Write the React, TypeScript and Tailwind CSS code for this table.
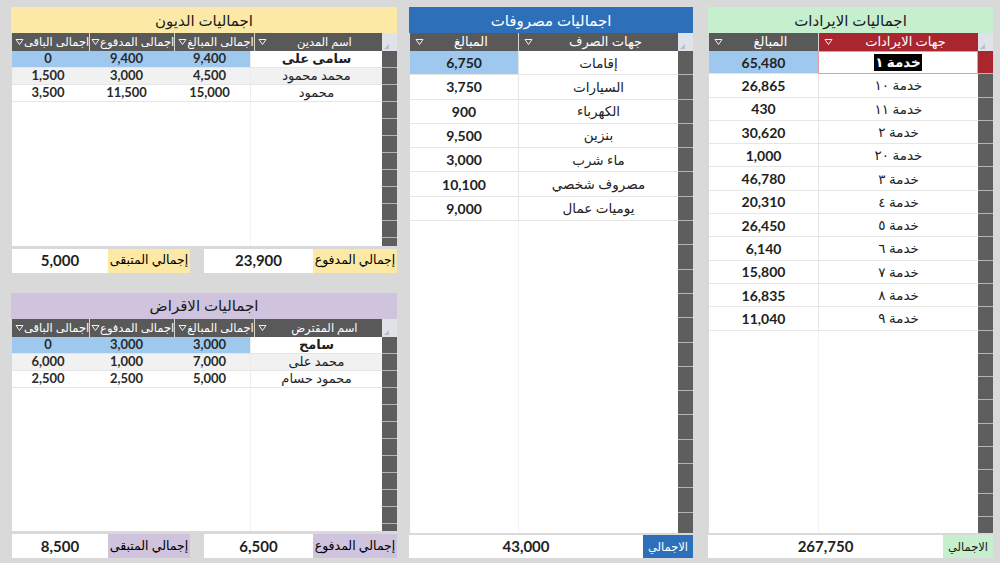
import React from 'react';

type Row = { cells: string[]; sel?: boolean };

function Arrow() {
  return (
    <svg width="9" height="8" viewBox="0 0 9 8" className="shrink-0">
      <path d="M1 1.5h7L4.5 6.5z" fill="none" stroke="#f2f2f2" strokeWidth="1" />
    </svg>
  );
}

function Corner() {
  return (
    <div className="w-[15px] shrink-0 bg-[#dfe3e9] flex items-end justify-end p-[2px]">
      <svg width="5" height="5" viewBox="0 0 5 5">
        <path d="M5 0V5H0z" fill="#b8bec8" />
      </svg>
    </div>
  );
}

function ScrollCell({ h, red }: { h: string; red?: boolean }) {
  return <div className={`w-[15px] shrink-0 border-b border-[#b5b5b5] ${red ? 'bg-[#a9262f]' : 'bg-[#5e5e5e]'} ${h}`} />;
}

// left side tables (debts / loans)
function SmallTable({ head, rows }: { head: string[]; rows: Row[] }) {
  const widths = ['w-[132px]', 'w-[81px]', 'w-[85px]', 'flex-1'];
  const filler = Array.from({ length: 14 });
  return (
    <div className="flex flex-col flex-1 min-h-0 ml-[1px]">
      <div className="flex h-[18px] bg-[#595959] text-white text-[11.5px]">
        <Corner />
        {head.map((t, i) => (
          <div key={i} className={`${widths[i]} flex items-center pl-[3px] border-l border-[#d4d4d4] last:border-l-0`}>
            <span className="flex-1 text-center whitespace-nowrap">{t}</span>
            <Arrow />
          </div>
        ))}
      </div>
      <div className="flex-1 min-h-0 overflow-hidden bg-white">
        {rows.map((r, ri) => (
          <div key={ri} className={`flex h-[17px] text-[13px] ${ri === 1 ? 'bg-[#f1f1f1]' : 'bg-white'}`}>
            <ScrollCell h="h-[17px]" />
            {r.cells.map((c, ci) => (
              <div
                key={ci}
                className={`${widths[ci]} flex items-center justify-center border-b border-[#e6e6e6] ${
                  ci === 0 ? 'border-l border-l-[#ececec]' : 'font-bold text-[#2a2a2a]'
                } ${r.sel && ci > 0 ? 'bg-[#9fc8ee]' : ''} ${r.sel && ci === 0 ? 'font-bold' : ''}`}
              >
                {c}
              </div>
            ))}
          </div>
        ))}
        {filler.map((_, i) => (
          <div key={i} className="flex h-[17px]">
            <ScrollCell h="h-[17px]" />
            <div className="w-[132px] border-l border-[#f3f3f3]" />
          </div>
        ))}
      </div>
    </div>
  );
}

function SmallFooter({ color, a, b }: { color: string; a: string; b: string }) {
  return (
    <div className="flex h-[24px] mt-[3px] ml-[1px] text-[12.5px] gap-[14px]">
      <div className="flex w-[193px]">
        <div className={`w-[84px] ${color} flex items-center justify-center whitespace-nowrap text-black`}>إجمالي المدفوع</div>
        <div className="flex-1 bg-white flex items-center justify-center font-bold text-[15px]">{a}</div>
      </div>
      <div className="flex flex-1">
        <div className={`w-[82px] ${color} flex items-center justify-center whitespace-nowrap text-black`}>إجمالي المتبقى</div>
        <div className="flex-1 bg-white flex items-center justify-center font-bold text-[15px]">{b}</div>
      </div>
    </div>
  );
}

function LeftPanel({ title, color, head, rows, a, b }: {
  title: string; color: string; head: string[]; rows: Row[]; a: string; b: string;
}) {
  return (
    <div className="flex flex-col flex-1 min-h-0">
      <div className={`h-[26px] ${color} flex items-center justify-center text-[15px] text-[#1a1a1a]`}>{title}</div>
      <SmallTable head={head} rows={rows} />
      <SmallFooter color={color} a={a} b={b} />
    </div>
  );
}

// big tables (expenses / revenues)
function BigPanel({ title, headBg, titleText, nameHead, nameHeadBg, rows, rowH, total, labelText, revenue }: {
  title: string; headBg: string; titleText: string; nameHead: string; nameHeadBg: string;
  rows: [string, string][]; rowH: string; total: string; labelText: string; revenue?: boolean;
}) {
  const filler = Array.from({ length: 22 });
  return (
    <div className="flex flex-col h-full">
      <div className={`h-[26px] ${headBg} ${titleText} flex items-center justify-center text-[15px]`}>{title}</div>
      <div className="flex h-[18px] text-white text-[13px] ml-[1px]">
        <Corner />
        <div className={`w-[160px] ${nameHeadBg} flex items-center pl-[5px] border-l border-[#d4d4d4]`}>
          <span className="flex-1 text-center">{nameHead}</span>
          <Arrow />
        </div>
        <div className="flex-1 bg-[#595959] flex items-center pl-[5px]">
          <span className="flex-1 text-center">المبالغ</span>
          <Arrow />
        </div>
      </div>
      <div className="flex-1 min-h-0 overflow-hidden bg-white ml-[1px]">
        {rows.map(([n, v], i) => {
          const first = i === 0;
          return (
            <div key={i} className={`flex ${rowH} text-[13.5px]`}>
              <ScrollCell h={rowH} red={revenue && first} />
              <div
                className={`w-[160px] flex items-center justify-center ${
                  revenue && first ? 'border border-[#e79a9f]' : 'border-b border-l border-[#e6e6e6]'
                } text-[#222]`}
              >
                {revenue && first ? <span className="bg-black text-white font-bold px-[1px] leading-[17px]">{n}</span> : n}
              </div>
              <div className={`flex-1 flex items-center justify-center font-bold text-[14px] text-[#222] border-b border-[#e6e6e6] ${first ? 'bg-[#9fc8ee]' : ''}`}>
                {v}
              </div>
            </div>
          );
        })}
        {filler.map((_, i) => (
          <div key={i} className={`flex ${rowH}`}>
            <ScrollCell h={rowH} />
            <div className="w-[160px] border-l border-[#f3f3f3]" />
          </div>
        ))}
      </div>
      <div className="flex h-[23px] mt-[2px]">
        <div className={`w-[50px] ${headBg} ${labelText} flex items-center justify-center text-[11.5px] whitespace-nowrap`}>الاجمالي</div>
        <div className="flex-1 bg-white flex items-center justify-center font-bold text-[15px] text-[#222]">{total}</div>
      </div>
    </div>
  );
}

const debtHead = ['اسم المدين', 'اجمالى المبالغ', 'اجمالى المدفوع', 'اجمالى الباقى'];
const loanHead = ['اسم المقترض', 'اجمالى المبالغ', 'اجمالى المدفوع', 'اجمالى الباقى'];

const debts: Row[] = [
  { cells: ['سامى على', '9,400', '9,400', '0'], sel: true },
  { cells: ['محمد محمود', '4,500', '3,000', '1,500'] },
  { cells: ['محمود', '15,000', '11,500', '3,500'] },
];

const loans: Row[] = [
  { cells: ['سامح', '3,000', '3,000', '0'], sel: true },
  { cells: ['محمد على', '7,000', '1,000', '6,000'] },
  { cells: ['محمود حسام', '5,000', '2,500', '2,500'] },
];

const expenses: [string, string][] = [
  ['إقامات', '6,750'],
  ['السيارات', '3,750'],
  ['الكهرباء', '900'],
  ['بنزين', '9,500'],
  ['ماء شرب', '3,000'],
  ['مصروف شخصي', '10,100'],
  ['يوميات عمال', '9,000'],
];

const revenues: [string, string][] = [
  ['خدمة ١', '65,480'],
  ['خدمة ١٠', '26,865'],
  ['خدمة ١١', '430'],
  ['خدمة ٢', '30,620'],
  ['خدمة ٢٠', '1,000'],
  ['خدمة ٣', '46,780'],
  ['خدمة ٤', '20,310'],
  ['خدمة ٥', '26,450'],
  ['خدمة ٦', '6,140'],
  ['خدمة ٧', '15,800'],
  ['خدمة ٨', '16,835'],
  ['خدمة ٩', '11,040'],
];

export default function App() {
  return (
    <div
      dir="rtl"
      className="w-[1000px] h-[563px] bg-[#d9d9d9] flex pt-[7px] pb-[5px] pr-[7px] pl-[11px] font-[Lato,'DejaVu_Sans',sans-serif] text-[#1f1f1f] overflow-hidden"
    >
      <div className="w-[285px] h-full">
        <BigPanel
          title="اجماليات الايرادات"
          headBg="bg-[#c6efce]"
          titleText="text-[#1a1a1a]"
          nameHead="جهات الايرادات"
          nameHeadBg="bg-[#a9262f]"
          rows={revenues}
          rowH="h-[23.3px]"
          total="267,750"
          labelText="text-[#1a1a1a]"
          revenue
        />
      </div>
      <div className="w-[284px] h-full mr-[15px]">
        <BigPanel
          title="اجماليات مصروفات"
          headBg="bg-[#2e6fba]"
          titleText="text-white"
          nameHead="جهات الصرف"
          nameHeadBg="bg-[#595959]"
          rows={expenses}
          rowH="h-[24.3px]"
          total="43,000"
          labelText="text-white"
        />
      </div>
      <div className="w-[386px] h-full mr-[12px] flex flex-col gap-[20px]">
        <LeftPanel title="اجماليات الديون" color="bg-[#fde9a6]" head={debtHead} rows={debts} a="23,900" b="5,000" />
        <LeftPanel title="اجماليات الاقراض" color="bg-[#cfc3dd]" head={loanHead} rows={loans} a="6,500" b="8,500" />
      </div>
    </div>
  );
}
